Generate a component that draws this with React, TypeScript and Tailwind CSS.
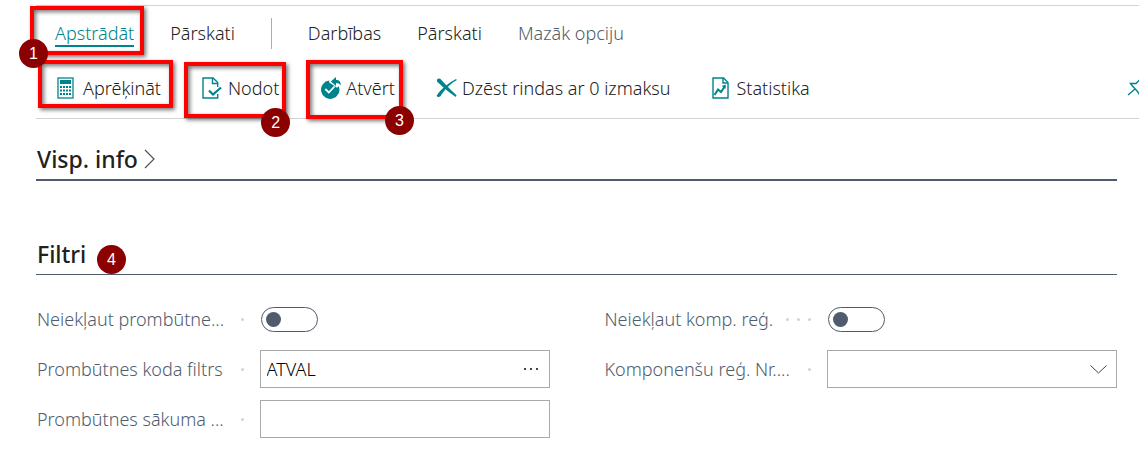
import { useState } from 'react';
import type { ReactNode } from 'react';

const iconClass = 'shrink-0 text-[#00848b]';

function CalculatorIcon() {
  return (
    <svg className={iconClass} width="18" height="22" viewBox="0 0 18 22" fill="none">
      <rect x="1" y="1" width="15" height="20" stroke="currentColor" strokeWidth="1.3" />
      <rect x="3" y="3" width="11" height="4" fill="currentColor" />
      <path
        d="M3 9h2v2H3zM6 9h2v2H6zM9 9h2v2H9zM12 9h2v2h-2zM3 12.500h2v2H3zM6 12.500h2v2H6zM9 12.500h2v2H9zM12 12.500h2v2h-2zM3 16h2v2H3zM6 16h2v2H6zM9 16h2v2H9zM12 16h2v2h-2z"
        fill="currentColor"
      />
    </svg>
  );
}

function PostIcon() {
  return (
    <svg className={iconClass} width="20" height="22" viewBox="0 0 20 22" fill="none" stroke="currentColor">
      <path d="M15.700 10V5.500L11 1H1v20h14.700v-4" strokeWidth="1.400" />
      <path d="M10.500 1v5.500h5" strokeWidth="1.400" />
      <path d="M7 13.500l4 4 8-7" strokeWidth="2.200" />
    </svg>
  );
}

function ReopenIcon() {
  return (
    <svg className={iconClass} width="22" height="22" viewBox="0 0 22 22" fill="none">
      <path
        d="M9.300 3.500A9.200 9.200 0 1 0 18.800 9.300L17 10.800 9 5.200z"
        fill="currentColor"
      />
      <path d="M10.800 4.500L16 0v2.900c3.200 0 5.300 2 4.500 5.600-.900-1.700-2.200-2.400-4.500-2.400V9z" fill="currentColor" />
      <path d="M5.300 12l3.500 3.500 5.700-6" stroke="#fff" strokeWidth="1.800" />
    </svg>
  );
}

function DeleteIcon() {
  return (
    <svg className={iconClass} width="22" height="20" viewBox="0 0 22 20" fill="currentColor">
      <path d="M1 1.500C2.500 0 4 .200 5 1.500c4.500 5 9 10 15.500 15.700L19.800 19C12.500 14 6.500 9 1 3.500z" />
      <path d="M20.800 2L20 1C13.500 4.500 5 10.500.700 17.500c.500 2 2 2 3.800.800C8.500 11.500 14.500 5.500 20.800 2z" />
    </svg>
  );
}

function StatisticsIcon() {
  return (
    <svg className={iconClass} width="17" height="22" viewBox="0 0 17 22" fill="none" stroke="currentColor">
      <path d="M1 1h10.500L16 5.500V21H1z" strokeWidth="1.400" />
      <path d="M11 1v5h5" strokeWidth="1.400" />
      <path d="M2.500 18l3.500-5.500 3 2.500 4-6" strokeWidth="2" />
      <path d="M9.800 9l4-1.500-.300 4.500z" fill="currentColor" stroke="none" />
    </svg>
  );
}

function PinIcon() {
  return (
    <svg className={iconClass} width="20" height="20" viewBox="0 0 20 20" fill="none" stroke="currentColor" strokeWidth="1.400">
      <path d="M1 17l7-6M3.500 5.500l2 2.500 5 5.500 2 3 1.500-5 4-4L12.500 2l-3.500 3.500z" />
    </svg>
  );
}

function Badge({ n, className }: { n: number; className: string }) {
  return (
    <span
      className={`pointer-events-none absolute z-20 flex size-[29px] items-center justify-center rounded-full bg-[#8b0000] font-['Liberation_Sans',sans-serif] text-base leading-none font-normal text-white ${className}`}
    >
      {n}
    </span>
  );
}

function Frame({ className }: { className: string }) {
  return (
    <span
      aria-hidden="true"
      className={`pointer-events-none absolute z-10 border-4 border-[#fe0000] shadow-[2px_2px_4px_#0008,inset_2px_2px_4px_#0008] ${className}`}
    />
  );
}

function Action({ icon, label, gap, children }: { icon: ReactNode; label: string; gap: string; children?: ReactNode }) {
  return (
    <button type="button" className={`relative flex items-center whitespace-nowrap ${gap}`}>
      {icon}
      <span>{label}</span>
      {children}
    </button>
  );
}

function Dots({ count }: { count: number }) {
  return (
    <span aria-hidden="true" className="flex gap-2">
      {Array.from({ length: count }, (_, i) => (
        <span key={i} className="size-[3px] rounded-full bg-[#d0d3d8]" />
      ))}
    </span>
  );
}

function Field({ id, label, dots, children }: { id: string; label: string; dots: number; children: ReactNode }) {
  return (
    <div className="flex h-[38px] items-center">
      <div className="flex min-w-0 flex-1 items-center justify-between pr-4 pl-px">
        <label htmlFor={id} className="whitespace-nowrap text-[#505c6d]">
          {label}
        </label>
        <Dots count={dots} />
      </div>
      <div className="flex w-[290px] shrink-0">{children}</div>
    </div>
  );
}

function Toggle({ id }: { id: string }) {
  return (
    <input
      id={id}
      type="checkbox"
      role="switch"
      className="ml-px h-[25px] w-[57px] appearance-none rounded-full border border-[#505c6d] bg-white p-1 before:block before:size-[15px] before:rounded-full before:bg-[#505c6d] checked:before:ml-8"
    />
  );
}

export default function App() {
  const [code, setCode] = useState('ATVAL');
  const [startDate, setStartDate] = useState('');
  const box = 'h-[38px] w-full border border-[#a9a9a9] bg-white px-1.5 text-black outline-none';

  return (
    <main className="overflow-hidden bg-white pt-[5px] pb-7 pl-9 font-['Noto_Sans','Open_Sans',sans-serif] text-lg leading-6 font-light text-[#212121]">
      <header className="border-y border-[#d2d3d6]">
        <nav className="flex h-[54px] items-center gap-9 pl-[19px] whitespace-nowrap">
          <button type="button" className="relative border-b-2 border-[#00848b] pt-0.5 text-[#00848b]">
            Apstrādāt
            <Frame className="-top-[13px] -right-[10px] -bottom-[10px] -left-[25px]" />
            <Badge n={1} className="top-5 -left-9" />
          </button>
          <button type="button">Pārskati</button>
          <span className="h-[31px] w-px bg-[#a5acb8]" />
          <button type="button">Darbības</button>
          <button type="button">Pārskati</button>
          <button type="button" className="text-[#505c6d]">Mazāk opciju</button>
        </nav>
        <div className="flex h-[58px] items-center justify-between pb-0.5">
          <div className="flex items-center gap-[41px] pl-[21px]">
            <Action icon={<CalculatorIcon />} label="Aprēķināt" gap="gap-2">
              <Frame className="-top-4 -right-3 -bottom-2 -left-[19px]" />
            </Action>
            <Action icon={<PostIcon />} label="Nodot" gap="gap-1.5">
              <Frame className="-top-[14px] -right-[7px] -bottom-[18px] -left-[18px]" />
              <Badge n={2} className="-right-[11px] -bottom-[37px]" />
            </Action>
            <Action icon={<ReopenIcon />} label="Atvērt" gap="gap-1">
              <Frame className="-top-4 -right-2 -bottom-[19px] -left-[14px]" />
              <Badge n={3} className="-right-[19px] -bottom-[35px]" />
            </Action>
            <Action icon={<DeleteIcon />} label="Dzēst rindas ar 0 izmaksu" gap="gap-1" />
            <Action icon={<StatisticsIcon />} label="Statistika" gap="gap-2" />
          </div>
          <button type="button" aria-label="Piespraust" className="-mr-2">
            <PinIcon />
          </button>
        </div>
      </header>

      <div className="pr-[22px]">
        <h2 className="mt-6 border-b-2 border-[#505c6d] pb-1 text-[23px] leading-8 font-medium">
          <button type="button" className="flex items-center gap-1.5 pl-px">
            Visp. info
            <svg width="11" height="20" viewBox="0 0 11 20" fill="none" stroke="#505050" strokeWidth="1.200">
              <path d="M1 1l9 9-9 9" />
            </svg>
          </button>
        </h2>

        <section>
          <h2 className="relative mt-[57px] border-b border-[#505c6d] pb-1 pl-px text-[23px] leading-8 font-medium">
            Filtri
            <Badge n={4} className="top-[7px] left-[61px]" />
          </h2>
          <form className="mt-[25px] grid grid-cols-2 gap-x-[54px]">
            <div className="flex flex-col gap-3">
              <Field id="exclude-absence" label="Neiekļaut prombūtne..." dots={1}>
                <Toggle id="exclude-absence" />
              </Field>
              <Field id="absence-code" label="Prombūtnes koda filtrs" dots={1}>
                <div className="relative w-full">
                  <input id="absence-code" value={code} onChange={(e) => setCode(e.target.value)} className={box} />
                  <button type="button" aria-label="Izvēlēties" className="absolute inset-y-0 right-3 flex items-center gap-1">
                    <span className="size-0.5 bg-[#444]" />
                    <span className="size-0.5 bg-[#444]" />
                    <span className="size-0.5 bg-[#444]" />
                  </button>
                </div>
              </Field>
              <Field id="absence-start" label="Prombūtnes sākuma ..." dots={1}>
                <input id="absence-start" value={startDate} onChange={(e) => setStartDate(e.target.value)} className={box} />
              </Field>
            </div>
            <div className="flex flex-col gap-3">
              <Field id="exclude-comp" label="Neiekļaut komp. reģ." dots={3}>
                <Toggle id="exclude-comp" />
              </Field>
              <Field id="comp-no" label="Komponenšu reģ. Nr...." dots={1}>
                <div className="relative w-full">
                  <select id="comp-no" className={`${box} appearance-none`}>
                    <option value=""></option>
                  </select>
                  <svg
                    className="pointer-events-none absolute top-[15px] right-2.5"
                    width="17"
                    height="9"
                    viewBox="0 0 17 9"
                    fill="none"
                    stroke="#444"
                    strokeWidth="1"
                  >
                    <path d="M.500.500l8 7.500 8-7.500" />
                  </svg>
                </div>
              </Field>
            </div>
          </form>
        </section>
      </div>
    </main>
  );
}
